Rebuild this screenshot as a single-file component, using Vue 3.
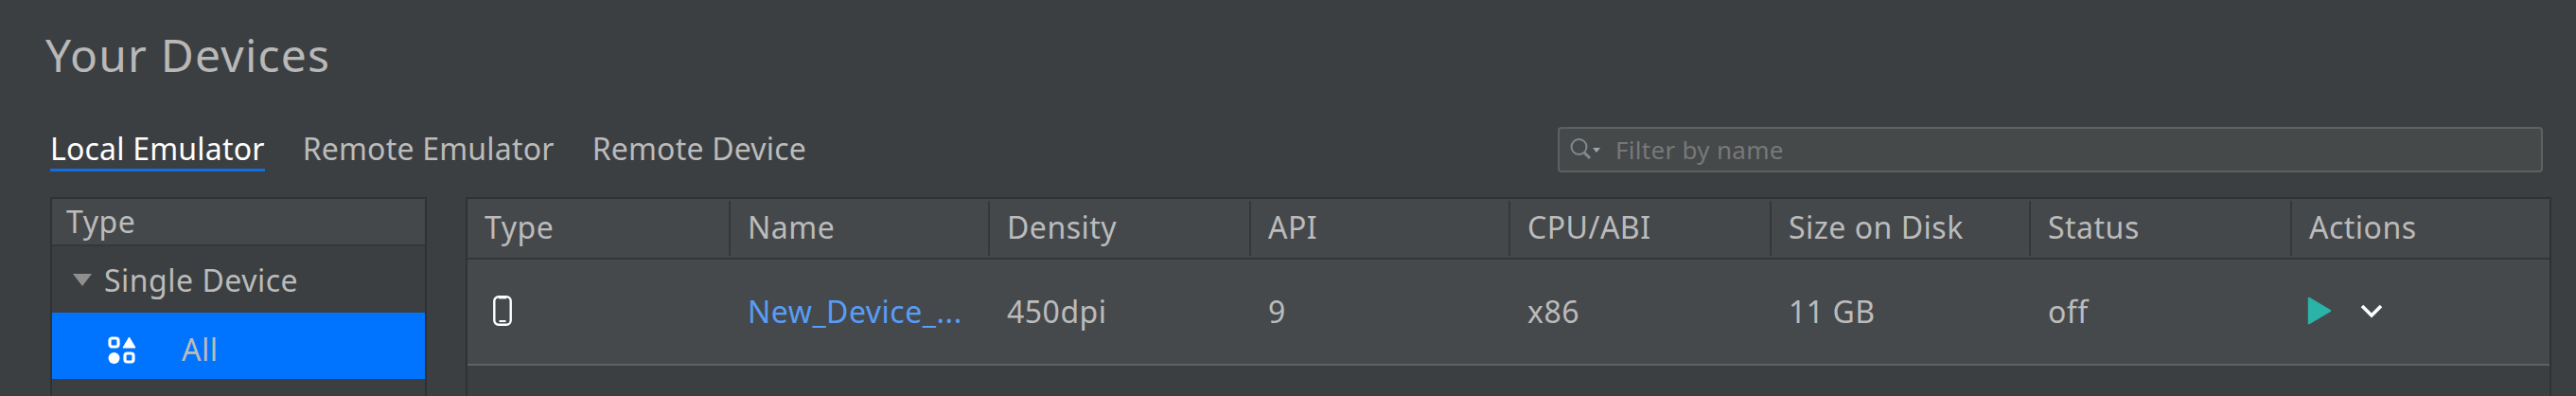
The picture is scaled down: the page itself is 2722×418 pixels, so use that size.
<template>
  <div class="page">
    <h1 class="title">Your Devices</h1>

    <div class="toolbar">
      <div class="tabs">
        <span
          v-for="tab in tabs"
          :key="tab"
          class="tab"
          :class="{ active: tab === activeTab }"
        >{{ tab }}</span>
      </div>
      <div class="filter">
        <svg class="search-icon" width="34" height="26" viewBox="0 0 34 26">
          <circle cx="10.5" cy="10" r="8" fill="none" stroke="#7f8b91" stroke-width="2" />
          <path d="M16 16 L22 22" stroke="#7f8b91" stroke-width="3" fill="none" />
          <path d="M25 11 H33 L29 16 Z" fill="#9aa7b0" />
        </svg>
        <span class="placeholder">Filter by name</span>
      </div>
    </div>

    <div class="content">
      <aside class="side">
        <div class="side-head">Type</div>
        <div class="group">
          <span class="caret"></span>
          <span>Single Device</span>
        </div>
        <div class="side-item">
          <svg class="all-icon" width="30" height="30" viewBox="0 0 30 30">
            <rect x="2" y="2" width="9" height="9" rx="2.5" fill="none" stroke="#fff" stroke-width="3.2" />
            <path d="M22.5 1 L29 12 H16 Z" fill="#fff" stroke="#fff" stroke-linejoin="round" />
            <circle cx="6.5" cy="23" r="6" fill="#fff" />
            <rect x="18" y="18" width="9" height="9" rx="2.5" fill="none" stroke="#fff" stroke-width="3.2" />
          </svg>
          <span class="all-label">All</span>
        </div>
      </aside>

      <section class="table">
        <div class="head">
          <div v-for="col in columns" :key="col" class="th">{{ col }}</div>
        </div>
        <div v-for="d in devices" :key="d.name" class="row">
          <div class="td">
            <svg width="20" height="32" viewBox="0 0 20 32">
              <rect x="1.3" y="1.3" width="17.4" height="29.4" rx="4.5" fill="none" stroke="#fff" stroke-width="2.4" />
              <path d="M6 2 H14 V3.4 H6 Z" fill="#fff" />
              <path d="M6.5 26 H13.5 V28 H6.5 Z" fill="#fff" />
            </svg>
          </div>
          <div class="td link">{{ d.name }}</div>
          <div class="td">{{ d.density }}</div>
          <div class="td">{{ d.api }}</div>
          <div class="td">{{ d.abi }}</div>
          <div class="td">{{ d.size }}</div>
          <div class="td">{{ d.status }}</div>
          <div class="td actions">
            <svg width="26" height="30" viewBox="0 0 26 30">
              <path d="M2 2 L24 15 L2 28 Z" fill="#2bb3a8" stroke="#2bb3a8" stroke-width="2.5" stroke-linejoin="round" />
            </svg>
            <svg class="chevron" width="24" height="16" viewBox="0 0 24 16">
              <path d="M2 3 L12 13 L22 3" fill="none" stroke="#fff" stroke-width="3.6" />
            </svg>
          </div>
        </div>
      </section>
    </div>
  </div>
</template>

<script setup>
const tabs = ['Local Emulator', 'Remote Emulator', 'Remote Device']
const activeTab = 'Local Emulator'

const columns = ['Type', 'Name', 'Density', 'API', 'CPU/ABI', 'Size on Disk', 'Status', 'Actions']

const devices = [
  { name: 'New_Device_...', density: '450dpi', api: '9', abi: 'x86', size: '11 GB', status: 'off' }
]
</script>

<style>
html, body {
  margin: 0;
  background: #3c3f41;
}
</style>

<style scoped>
.page {
  box-sizing: border-box;
  height: 418px;
  overflow: hidden;
  padding: 0 26px 0 53px;
  background: #3c3f41;
  color: #bbbbbb;
  font-family: "Noto Sans", "DejaVu Sans", sans-serif;
  font-size: 32px;
  letter-spacing: 0.5px;
}

.title {
  margin: 0 0 0 -5px;
  padding-top: 28px;
  padding-bottom: 46px;
  line-height: 60px;
  font-size: 48px;
  font-weight: 400;
  letter-spacing: 1.2px;
  color: #b8b8b8;
}

.toolbar {
  display: flex;
  justify-content: space-between;
  height: 48px;
  padding-right: 9px;
}

.tabs {
  display: flex;
  gap: 40px;
  letter-spacing: 0.2px;
}

.tab {
  height: 44px;
  line-height: 46px;
}

.tab.active {
  color: #ffffff;
  border-bottom: 3px solid #0f6fe0;
}

.filter {
  box-sizing: border-box;
  display: flex;
  align-items: center;
  width: 1041px;
  height: 48px;
  padding-left: 10px;
  border: 2px solid #5e6162;
  border-radius: 4px;
  background: #45494a;
  color: #787878;
  font-size: 26px;
  letter-spacing: 0.3px;
}

.placeholder {
  margin-left: 15px;
}

.content {
  display: flex;
  gap: 41px;
  margin-top: 26px;
}

.side,
.table {
  box-sizing: border-box;
  height: 300px;
  border: 2px solid #303133;
  border-bottom: 0;
}

.side {
  flex: 0 0 398px;
}

.side-head {
  box-sizing: border-box;
  height: 50px;
  padding-left: 15px;
  line-height: 48px;
  background: #45484b;
  border-bottom: 2px solid #343638;
}

.group {
  display: flex;
  align-items: center;
  height: 70px;
  padding-left: 22px;
}

.caret {
  width: 0;
  height: 0;
  margin-right: 13px;
  border-left: 10px solid transparent;
  border-right: 10px solid transparent;
  border-top: 13px solid #8f8f8f;
}

.side-item {
  display: flex;
  align-items: center;
  height: 70px;
  padding-left: 59px;
  background: #0073ff;
}

.all-icon {
  margin-top: 10px;
  margin-right: 48px;
}

.all-label {
  padding-top: 6px;
}

.table {
  flex: 1;
}

.head,
.row {
  display: grid;
  grid-template-columns: 276px 274px 276px 274px 276px 274px 276px 1fr;
}

.head {
  box-sizing: border-box;
  height: 64px;
  background: #45484b;
  border-bottom: 2px solid #343638;
}

.th {
  margin: 2px 0;
  padding-left: 18px;
  line-height: 56px;
  border-left: 2px solid #35383a;
}

.th:first-child {
  border-left: 0;
  padding-left: 18px;
}

.row {
  box-sizing: border-box;
  height: 112px;
  background: #46494c;
  border-bottom: 2px solid #5f6061;
}

.td {
  display: flex;
  align-items: center;
  padding-left: 20px;
  padding-bottom: 2px;
}

.td:first-child {
  padding-left: 27px;
}

.link {
  color: #589df6;
}

.actions {
  padding-left: 18px;
}

.chevron {
  margin-left: 30px;
}
</style>
